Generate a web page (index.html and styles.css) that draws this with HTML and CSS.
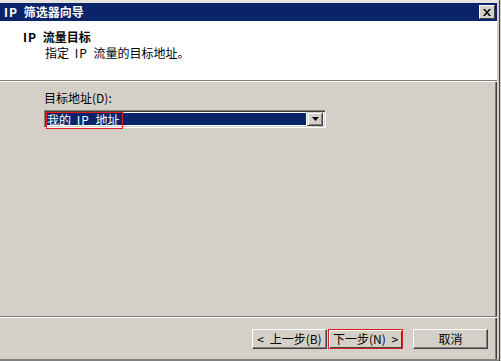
FILE: index.html
```html
<!DOCTYPE html>
<html lang="zh">
<head>
<meta charset="utf-8">
<link rel="stylesheet" href="styles.css">
</head>
<body>
<div class="window">
  <div class="titlebar">
    <span class="title"><span class="lat">IP</span> 筛选器向导</span>
    <span class="close"><svg width="8" height="7" viewBox="0 0 8 7"><path d="M0 0h2l2 2.5L6 0h2L5 3.5 8 7H6L4 4.5 2 7H0l3-3.5z" fill="#000"/></svg></span>
  </div>
  <div class="header">
    <div class="h-title"><span class="lat">IP</span> 流量目标</div>
    <div class="h-sub">指定 <span class="lat">IP</span> 流量的目标地址。</div>
  </div>
  <div class="sep"></div>
  <div class="content">
    <div class="label">目标地址(<u>D</u>):</div>
    <div class="combo">
      <div class="combo-value"><span class="mark">我的 <span class="lat">IP</span> 地址</span></div>
      <div class="combo-btn"><svg width="7" height="4" viewBox="0 0 7 4"><path d="M0 0h7L3.5 4z" fill="#000"/></svg></div>
    </div>
  </div>
  <div class="sep"></div>
  <div class="footer">
    <div class="btn">&lt; 上一步(<u>B</u>)</div>
    <div class="btn btn-marked">下一步(<u>N</u>) &gt;</div>
    <div class="btn btn-cancel">取消</div>
  </div>
</div>
</body>
</html>
```
FILE: styles.css
```css
html, body {
  margin: 0;
  padding: 0;
  background: #d4d0c8;
}
body {
  font-family: "Noto Sans CJK SC", "DejaVu Sans", sans-serif;
  font-size: 12px;
  color: #000;
  word-spacing: 3px;
}
.lat {
  letter-spacing: 1px;
}
.window {
  width: 501px;
  height: 361px;
  box-sizing: border-box;
  display: flex;
  flex-direction: column;
  background: #d4d0c8;
  border-top: 3px solid #e6e3de;
  border-right: 4px solid #d4d0c8;
  box-shadow: inset -1px 0 0 #404040, inset -2px 0 0 #808080;
  border-bottom: 2px solid #808080;
  position: relative;
}
.window::after {
  content: "";
  position: absolute;
  top: -3px;
  bottom: -2px;
  right: -3px;
  width: 1px;
  background: #404040;
}
.titlebar {
  height: 18px;
  background: #0a246a;
  display: flex;
  align-items: center;
  justify-content: space-between;
  padding: 0 2px 0 4px;
}
.title {
  color: #fff;
  font-weight: bold;
  line-height: 18px;
}
.close {
  width: 14px;
  height: 12px;
  background: #d4d0c8;
  border-top: 1px solid #fff;
  border-left: 1px solid #fff;
  border-right: 1px solid #404040;
  border-bottom: 1px solid #404040;
  display: flex;
  align-items: center;
  justify-content: center;
}
.header {
  height: 59px;
  background: #fff;
  box-sizing: border-box;
  padding: 8px 0 0 23px;
}
.h-title {
  font-weight: bold;
  line-height: 16px;
}
.h-sub {
  padding-left: 22px;
  line-height: 16px;
}
.sep {
  height: 1px;
  background: #808080;
  border-bottom: 1px solid #fff;
}
.content {
  flex: 1;
  padding: 9px 0 0 44px;
}
.label {
  line-height: 14px;
  margin-bottom: 5px;
}
.combo {
  width: 282px;
  height: 18px;
  box-sizing: border-box;
  display: flex;
  background: #fff;
  border-top: 1px solid #808080;
  border-left: 1px solid #808080;
  border-right: 1px solid #fff;
  border-bottom: 1px solid #fff;
  box-shadow: inset 1px 1px 0 #404040, inset -1px -1px 0 #d4d0c8;
  padding: 2px;
}
.combo-value {
  flex: 1;
  background: #0a246a;
  color: #fff;
  display: flex;
  align-items: center;
  margin-right: 1px;
}
.mark {
  display: inline-block;
  border: 1px solid #e02020;
  line-height: 13px;
  height: 13px;
  padding: 0 2px 2px 0;
  margin-top: 2px;
  margin-left: -1px;
}
.combo-btn {
  width: 16px;
  height: 14px;
  margin-top: -1px;
  box-sizing: border-box;
  background: #d4d0c8;
  border-top: 1px solid #d4d0c8;
  border-left: 1px solid #d4d0c8;
  border-right: 1px solid #404040;
  border-bottom: 1px solid #404040;
  box-shadow: inset 1px 1px 0 #fff, inset -1px -1px 0 #808080;
  display: flex;
  align-items: center;
  justify-content: center;
}
.footer {
  height: 41px;
  box-sizing: border-box;
  display: flex;
  justify-content: flex-end;
  padding: 11px 9px 0 0;
}
.btn {
  width: 75px;
  height: 20px;
  box-sizing: border-box;
  border-top: 1px solid #fff;
  border-left: 1px solid #fff;
  border-right: 1px solid #404040;
  border-bottom: 1px solid #404040;
  box-shadow: inset -1px -1px 0 #808080;
  display: flex;
  align-items: center;
  justify-content: center;
  line-height: 18px;
}
.btn-marked {
  margin-left: 1px;
  border: 1px solid #e02020;
  box-shadow: inset 1px 1px 0 #fff, inset -1px -1px 0 #404040;
}
.btn-cancel {
  margin-left: 10px;
}
u {
  text-decoration: none;
}
```
